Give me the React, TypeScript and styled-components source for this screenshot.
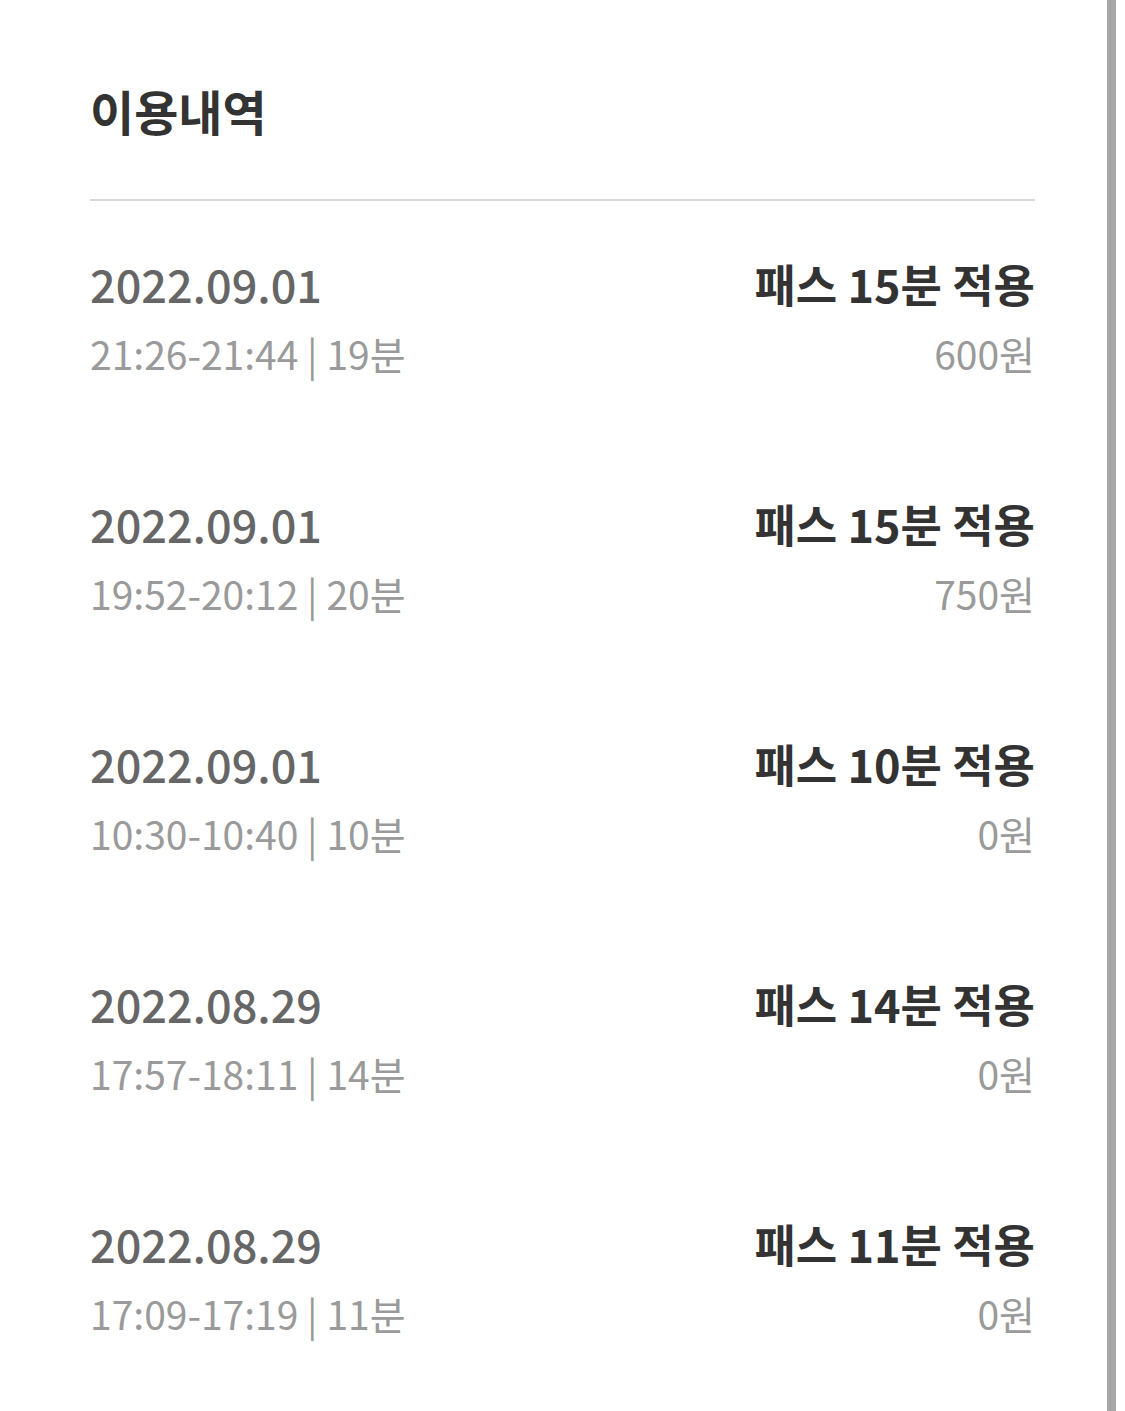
import React from "react";
import styled, { createGlobalStyle } from "styled-components";

const Global = createGlobalStyle`
  html, body { margin: 0; padding: 0; background: #fff; }
  body { font-family: "Noto Sans CJK KR", "Noto Sans", sans-serif; }
`;

const Page = styled.div`
  width: 1125px;
  height: 1411px;
  overflow: hidden;
  display: flex;
  background: #fff;
`;

const Content = styled.main`
  flex: 1;
  padding: 0 72px 0 90px;
  display: flex;
  flex-direction: column;
`;

const Title = styled.h1`
  margin: 0;
  padding-top: 77px;
  box-sizing: border-box;
  height: 201px;
  font-size: 48px;
  line-height: 66px;
  font-weight: 700;
  color: #333;
  border-bottom: 2px solid #d8d8dc;
`;

const List = styled.ul`
  list-style: none;
  margin: 0;
  padding: 0;
`;

const Row = styled.li`
  height: 240px;
  padding-top: 53px;
  box-sizing: border-box;
  display: flex;
  justify-content: space-between;
`;

const Col = styled.div<{ $right?: boolean }>`
  display: flex;
  flex-direction: column;
  align-items: ${(p) => (p.$right ? "flex-end" : "flex-start")};
  gap: 9px;
`;

const DateText = styled.div`
  font-size: 45px;
  line-height: 60px;
  font-weight: 500;
  color: #666;
`;

const Pass = styled.div`
  font-size: 45px;
  line-height: 60px;
  font-weight: 700;
  color: #333;
`;

const Sub = styled.div`
  font-size: 39px;
  line-height: 60px;
  font-weight: 400;
  color: #9a9a9a;
`;

const Scrollbar = styled.div`
  width: 9px;
  margin-right: 9px;
  background: #a6a6a6;
`;

const items = [
  { date: "2022.09.01", time: "21:26-21:44 | 19분", pass: "패스 15분 적용", price: "600원" },
  { date: "2022.09.01", time: "19:52-20:12 | 20분", pass: "패스 15분 적용", price: "750원" },
  { date: "2022.09.01", time: "10:30-10:40 | 10분", pass: "패스 10분 적용", price: "0원" },
  { date: "2022.08.29", time: "17:57-18:11 | 14분", pass: "패스 14분 적용", price: "0원" },
  { date: "2022.08.29", time: "17:09-17:19 | 11분", pass: "패스 11분 적용", price: "0원" },
];

export default function App() {
  return (
    <Page>
      <Global />
      <Content>
        <Title>이용내역</Title>
        <List>
          {items.map((it, i) => (
            <Row key={i}>
              <Col>
                <DateText>{it.date}</DateText>
                <Sub>{it.time}</Sub>
              </Col>
              <Col $right>
                <Pass>{it.pass}</Pass>
                <Sub>{it.price}</Sub>
              </Col>
            </Row>
          ))}
        </List>
      </Content>
      <Scrollbar />
    </Page>
  );
}
